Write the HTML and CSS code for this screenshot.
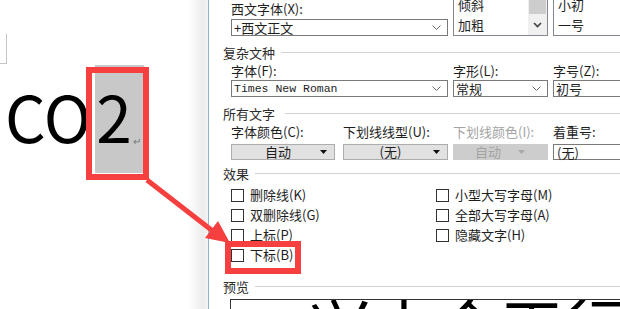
FILE: index.html
```html
<!DOCTYPE html>
<html lang="zh-CN">
<head>
    <meta charset="UTF-8">
    <title>字体</title>
    <link rel="stylesheet" href="styles.css">
</head>
<body>
<div class="screen">

    <div class="doc">
        <div class="corner-mark"></div>
        <div class="doc-line">
            <span class="co">CO</span>
            <span class="sel">2<span class="para">↵</span></span>
        </div>
    </div>

    <div class="dialog">
        <div class="fields fields-top">
            <div class="field span2">
                <div class="label">西文字体(X):</div>
                <div class="combo">
                    <span class="value">+西文正文</span>
                    <svg class="chev" width="9" height="5" viewBox="0 0 9 5"><polyline points="0.5,0.5 4.5,4.5 8.5,0.5"/></svg>
                </div>
            </div>
            <div class="list list-style">
                <div class="list-items">
                    <div>倾斜</div>
                    <div>加粗</div>
                </div>
                <div class="scrollbar">
                    <div class="thumb"></div>
                    <div class="scroll-btn">
                        <svg width="9" height="6" viewBox="0 0 9 6"><polyline points="1,1 4.5,4.5 8,1"/></svg>
                    </div>
                </div>
            </div>
            <div class="list list-size">
                <div class="list-items">
                    <div>小初</div>
                    <div>一号</div>
                </div>
            </div>
        </div>

        <div class="section">复杂文种</div>
        <div class="fields">
            <div class="field span2">
                <div class="label">字体(F):</div>
                <div class="combo">
                    <span class="value mono">Times New Roman</span>
                    <svg class="chev" width="9" height="5" viewBox="0 0 9 5"><polyline points="0.5,0.5 4.5,4.5 8.5,0.5"/></svg>
                </div>
            </div>
            <div class="field">
                <div class="label">字形(L):</div>
                <div class="combo">
                    <span class="value">常规</span>
                    <svg class="chev" width="9" height="5" viewBox="0 0 9 5"><polyline points="0.5,0.5 4.5,4.5 8.5,0.5"/></svg>
                </div>
            </div>
            <div class="field">
                <div class="label">字号(Z):</div>
                <div class="combo">
                    <span class="value">初号</span>
                </div>
            </div>
        </div>

        <div class="section section-wide">所有文字</div>
        <div class="fields fields-buttons">
            <div class="field col-a">
                <div class="label">字体颜色(C):</div>
                <div class="drop">
                    <span>自动</span>
                    <svg class="tri" width="7" height="4" viewBox="0 0 7 4"><polygon points="0,0 7,0 3.5,4"/></svg>
                </div>
            </div>
            <div class="field">
                <div class="label">下划线线型(U):</div>
                <div class="drop">
                    <span>(无)</span>
                    <svg class="tri" width="7" height="4" viewBox="0 0 7 4"><polygon points="0,0 7,0 3.5,4"/></svg>
                </div>
            </div>
            <div class="field">
                <div class="label is-disabled">下划线颜色(I):</div>
                <div class="drop drop-disabled">
                    <span>自动</span>
                    <svg class="tri" width="7" height="4" viewBox="0 0 7 4"><polygon points="0,0 7,0 3.5,4"/></svg>
                </div>
            </div>
            <div class="field">
                <div class="label">着重号:</div>
                <div class="combo combo-short">
                    <span class="value">(无)</span>
                </div>
            </div>
        </div>

        <div class="section">效果</div>
        <div class="checks">
            <div class="check"><span class="box"></span>删除线(K)</div>
            <div class="check"><span class="box"></span>双删除线(G)</div>
            <div class="check"><span class="box"></span>上标(P)</div>
            <div class="check"><span class="box"></span>下标(B)</div>
            <div class="check"><span class="box"></span>小型大写字母(M)</div>
            <div class="check"><span class="box"></span>全部大写字母(A)</div>
            <div class="check"><span class="box"></span>隐藏文字(H)</div>
        </div>

        <div class="section">预览</div>
        <div class="preview"><span>兴古合天行</span></div>
    </div>

    <!-- annotations drawn over the screenshot -->
    <svg class="arrow" width="620" height="309" viewBox="0 0 620 309">
        <line x1="147" y1="180" x2="214" y2="232"/>
        <polygon points="230,243 205,238 218,221"/>
    </svg>
    <div class="callout callout-char"></div>
    <div class="callout callout-sub"></div>

</div>
</body>
</html>
```

FILE: styles.css
```css
* {
    box-sizing: border-box;
}

body {
    margin: 0;
    background: #fff;
    font-family: "Noto Sans CJK SC", sans-serif;
    font-size: 13px;
    color: #1e1e1e;
}

.screen {
    position: relative;
    display: flex;
    width: 620px;
    height: 309px;
    overflow: hidden;
}

/* Word document page */
.doc {
    width: 208px;
    flex: none;
    padding-top: 34px;
    background: linear-gradient(to right, #fff 188px, #ececec 203px, #f4f4f4 208px);
}

.corner-mark {
    width: 7px;
    height: 30px;
    border-right: 1px solid #c4c4c4;
    border-bottom: 1px solid #c4c4c4;
}

.doc-line {
    display: flex;
    align-items: flex-start;
    margin-top: 1px;
    padding-left: 5px;
    font-size: 64px;
    line-height: 100px;
    color: #000;
}

.sel {
    display: flex;
    width: 49px;
    height: 108px;
    margin-left: 4px;
    padding-left: 1px;
    background: #c8c8c8;
}

.para {
    font-size: 10px;
    line-height: 1;
    color: #777;
    margin-top: 71px;
    margin-left: 1px;
}

/* Font dialog */
.dialog {
    flex: 1;
    min-width: 0;
    overflow: hidden;
    border-left: 1px solid #8fb2d2;
    padding-left: 14px;
}

.fields {
    display: grid;
    grid-template-columns: 107px 105px 95px 100px;
    column-gap: 5px;
    margin-left: 8px;
}

.fields-top {
    height: 36px;
}

.span2 {
    grid-column: span 2;
}

.col-a .drop {
    width: 104px;
}

.label {
    height: 18px;
    line-height: 18px;
    white-space: nowrap;
}

.label.is-disabled {
    color: #a3a3a3;
}

.fields-top .label {
    margin-bottom: 1px;
}

.combo {
    display: flex;
    align-items: center;
    height: 17px;
    border: 1px solid #7a7a7a;
    background: #fff;
    padding: 0 6px 0 2px;
}

.combo .value {
    flex: 1;
    white-space: nowrap;
    line-height: 15px;
}

.mono {
    font-family: "Liberation Mono", monospace;
    font-size: 11.5px;
}

.chev polyline {
    fill: none;
    stroke: #6a6a6a;
    stroke-width: 1;
}

.list {
    display: flex;
    height: 36px;
    border: 1px solid #828790;
    border-top: none;
    background: #fff;
    overflow: hidden;
}

.list-items {
    flex: 1;
    display: flex;
    flex-direction: column;
    justify-content: flex-end;
    padding-left: 4px;
}

.list-items div {
    height: 20px;
    line-height: 19px;
    flex: none;
}

.scrollbar {
    width: 19px;
    display: flex;
    flex-direction: column;
    background: #f0f0f0;
}

.thumb {
    height: 14px;
    margin: 0 1px;
    background: #cdcdcd;
}

.scroll-btn {
    flex: 1;
    display: flex;
    align-items: center;
    justify-content: center;
}

.scroll-btn polyline {
    fill: none;
    stroke: #404040;
    stroke-width: 1.6;
}

.section {
    display: flex;
    align-items: center;
    gap: 6px;
    height: 16px;
    line-height: 15px;
    color: #2c2c2c;
}

.section::after {
    content: "";
    flex: 1;
    border-top: 1px solid #d2d2d2;
}

.section-wide {
    gap: 10px;
}

.fields-top + .section {
    margin-top: 7px;
}

.section + .fields {
    margin-top: 2px;
}

.fields + .section {
    margin-top: 8px;
}

.fields-buttons + .section {
    margin-top: 5px;
}

.fields .drop,
.combo-short {
    margin-top: 3px;
}

.combo-short {
    height: 16px;
    padding-left: 3px;
}

.drop {
    display: flex;
    align-items: center;
    height: 16px;
    background: #e1e1e1;
    border: 1px solid #adadad;
    line-height: 14px;
}

.drop span {
    flex: 1;
    text-align: center;
    padding-left: 4px;
}

.drop .tri {
    margin-right: 7px;
    fill: #111;
}

.drop-disabled {
    background: #cdcdcd;
    border-color: #cdcdcd;
    color: #a3a3a3;
}

.drop-disabled .tri {
    fill: #a8a8a8;
    margin-right: 22px;
}

.section + .checks {
    margin-top: 4px;
}

.checks {
    display: grid;
    grid-template-rows: repeat(4, 20px);
    grid-template-columns: 205px 1fr;
    grid-auto-flow: column;
    margin-left: 8px;
}

.check {
    display: flex;
    align-items: center;
    gap: 6px;
    white-space: nowrap;
    line-height: 18px;
}

.box {
    width: 13px;
    height: 13px;
    border: 1px solid #333;
    background: #fff;
}

.checks + .section {
    margin-top: 13px;
}

.preview {
    margin: 5px 0 0 7px;
    height: 40px;
    border: 1px solid #333;
    border-right: none;
    padding-left: 77px;
    overflow: hidden;
    font-size: 64px;
    line-height: 48px;
    color: #000;
    white-space: nowrap;
}

/* red annotations */
.arrow {
    position: absolute;
    top: 0;
    left: 0;
    pointer-events: none;
}

.arrow line {
    stroke: #f63f3f;
    stroke-width: 5;
}

.arrow polygon {
    fill: #f63f3f;
}

.callout {
    position: absolute;
    border: 6px solid #f63f3f;
}

.callout-char {
    left: 86px;
    top: 67px;
    width: 63px;
    height: 113px;
}

.callout-sub {
    left: 225px;
    top: 241px;
    width: 76px;
    height: 33px;
}
```
